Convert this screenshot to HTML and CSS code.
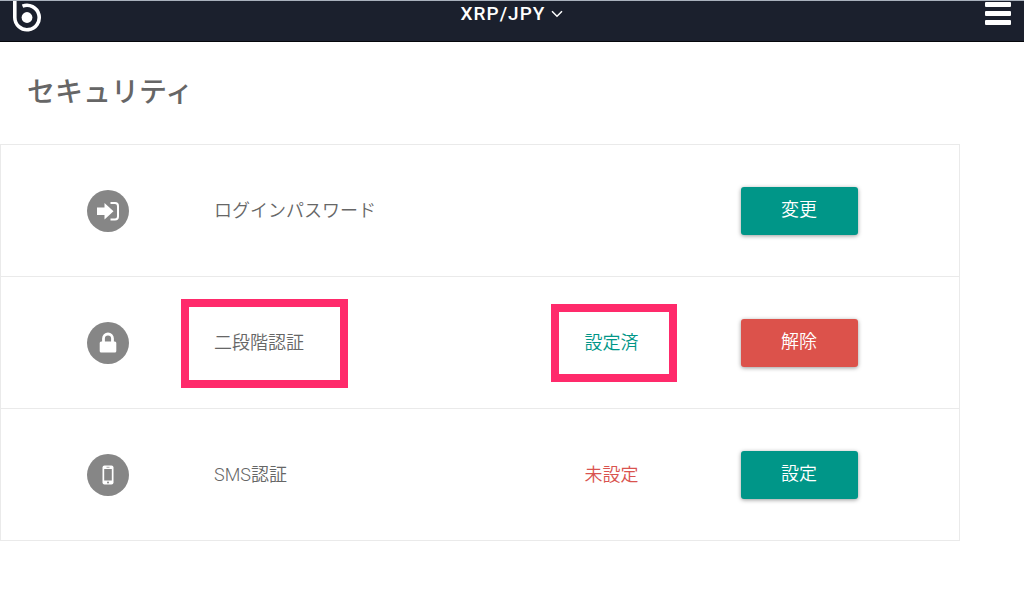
FILE: index.html
```html
<!DOCTYPE html>
<html lang="ja">
<head>
  <meta charset="UTF-8" />
  <meta name="viewport" content="width=device-width, initial-scale=1.0"/>
  <title>セキュリティ</title>
  <link rel="stylesheet" href="styles.css">
</head>
<body>

  <header class="navbar">
    <a class="logo" href="#" aria-label="ホーム">
      <svg width="30" height="32" viewBox="0 0 30 32" fill="none" stroke="#fff">
        <path d="M1.8 0V16.5A12.2 12.2 0 1 0 9.5 5.2" stroke-width="3.6"/>
        <circle cx="14" cy="16.5" r="5.4" fill="#fff" stroke="none"/>
      </svg>
    </a>
    <button type="button" class="pair">
      XRP/JPY
      <svg width="12" height="8" viewBox="0 0 12 8" fill="none" stroke="#fff" stroke-width="1.5">
        <path d="M1 1.2L6 6.2L11 1.2"/>
      </svg>
    </button>
    <button type="button" class="menu" aria-label="メニュー">
      <span></span>
      <span></span>
      <span></span>
    </button>
  </header>

  <main>
    <h1>セキュリティ</h1>

    <ul class="settings">
      <li class="row">
        <div class="icon">
          <svg width="24" height="20" viewBox="0 0 24 20">
            <path d="M1 6.5H8.5V2L17.5 10.2L8.5 18.5V14H1Z" fill="#fff"/>
            <path d="M14.5 2H19a3 3 0 0 1 3 3v10.5a3 3 0 0 1-3 3h-4.5" fill="none" stroke="#fff" stroke-width="2"/>
          </svg>
        </div>
        <div class="name">ログインパスワード</div>
        <div class="status"></div>
        <div class="action"><button type="button" class="btn">変更</button></div>
      </li>
      <li class="row">
        <div class="icon">
          <svg width="18" height="22" viewBox="0 0 18 22">
            <path d="M4.5 10V6.5a4.5 4.5 0 0 1 9 0V10" fill="none" stroke="#fff" stroke-width="2.8"/>
            <rect x="0.7" y="9.5" width="16.6" height="11" rx="1.5" fill="#fff"/>
          </svg>
        </div>
        <div class="name"><span class="mark mark-name">二段階認証</span></div>
        <div class="status done"><span class="mark mark-status">設定済</span></div>
        <div class="action"><button type="button" class="btn btn-danger">解除</button></div>
      </li>
      <li class="row">
        <div class="icon">
          <svg width="12" height="20" viewBox="0 0 12 20">
            <rect x="0.5" y="0.5" width="11" height="19" rx="2" fill="#fff"/>
            <rect x="2.2" y="4" width="7.6" height="11.5" fill="#868686"/>
            <path d="M4.5 2.3h3" stroke="#868686" stroke-width="0.7"/>
            <circle cx="6" cy="17.4" r="1" fill="#868686"/>
          </svg>
        </div>
        <div class="name">SMS認証</div>
        <div class="status unset">未設定</div>
        <div class="action"><button type="button" class="btn">設定</button></div>
      </li>
    </ul>
  </main>

</body>
</html>
```

FILE: styles.css
```css
* {
  box-sizing: border-box;
}

body {
  margin: 0;
  background: #fff;
  color: #666;
  font-family: Roboto, "Noto Sans CJK JP", sans-serif;
  font-size: 18px;
  font-weight: 350;
  line-height: 24px;
}

button {
  font: inherit;
  border: none;
  cursor: pointer;
}

.navbar {
  display: grid;
  grid-template-columns: 1fr auto 1fr;
  align-items: start;
  height: 42px;
  padding: 0 13px;
  background: #1b202d;
  border-top: 1px solid #a9b1bc;
  border-bottom: 1px solid #05070c;
}

.logo svg {
  display: block;
}

.pair {
  display: flex;
  align-items: center;
  gap: 6px;
  padding: 1px 0;
  background: none;
  color: #fff;
  font-size: 19px;
  font-weight: 500;
  letter-spacing: 1px;
}

.menu {
  justify-self: end;
  display: grid;
  gap: 4px;
  width: 26px;
  padding: 1px 0;
  background: none;
}

.menu span {
  height: 5px;
  border-radius: 1px;
  background: #fff;
}

main {
  padding-right: 64px;
}

h1 {
  margin: 0;
  padding: 31px 27px;
  font-size: 28px;
  font-weight: 500;
  line-height: 40px;
}

.settings {
  margin: 0;
  padding: 0;
  list-style: none;
  border: 1px solid #eaeaea;
  border-top: none;
}

.row {
  display: grid;
  grid-template-columns: 213fr 290fr 215fr 160fr 80fr;
  align-items: center;
  height: 132px;
  border-top: 1px solid #eaeaea;
}

.icon {
  display: flex;
  align-items: center;
  justify-content: center;
  justify-self: center;
  width: 42px;
  height: 42px;
  border-radius: 50%;
  background: #868686;
}

.status,
.action {
  text-align: center;
}

.done {
  color: #009688;
}

.unset {
  color: #d9534f;
}

.btn {
  width: 117px;
  height: 48px;
  padding: 0 0 2px;
  border-radius: 3px;
  background: #009688;
  color: #fff;
  box-shadow: 0 1px 4px rgba(0, 0, 0, 0.4);
}

.btn-danger {
  background: #dc524b;
}

/* highlight frames drawn around the text */
.mark {
  display: inline-block;
  position: relative;
}

.mark::after {
  content: "";
  position: absolute;
  border: 8px solid #ff2a6b;
}

.mark-name::after {
  inset: -32px -44px -33px -33px;
}

.mark-status::after {
  inset: -27px -38px -27px -34px;
}
```
